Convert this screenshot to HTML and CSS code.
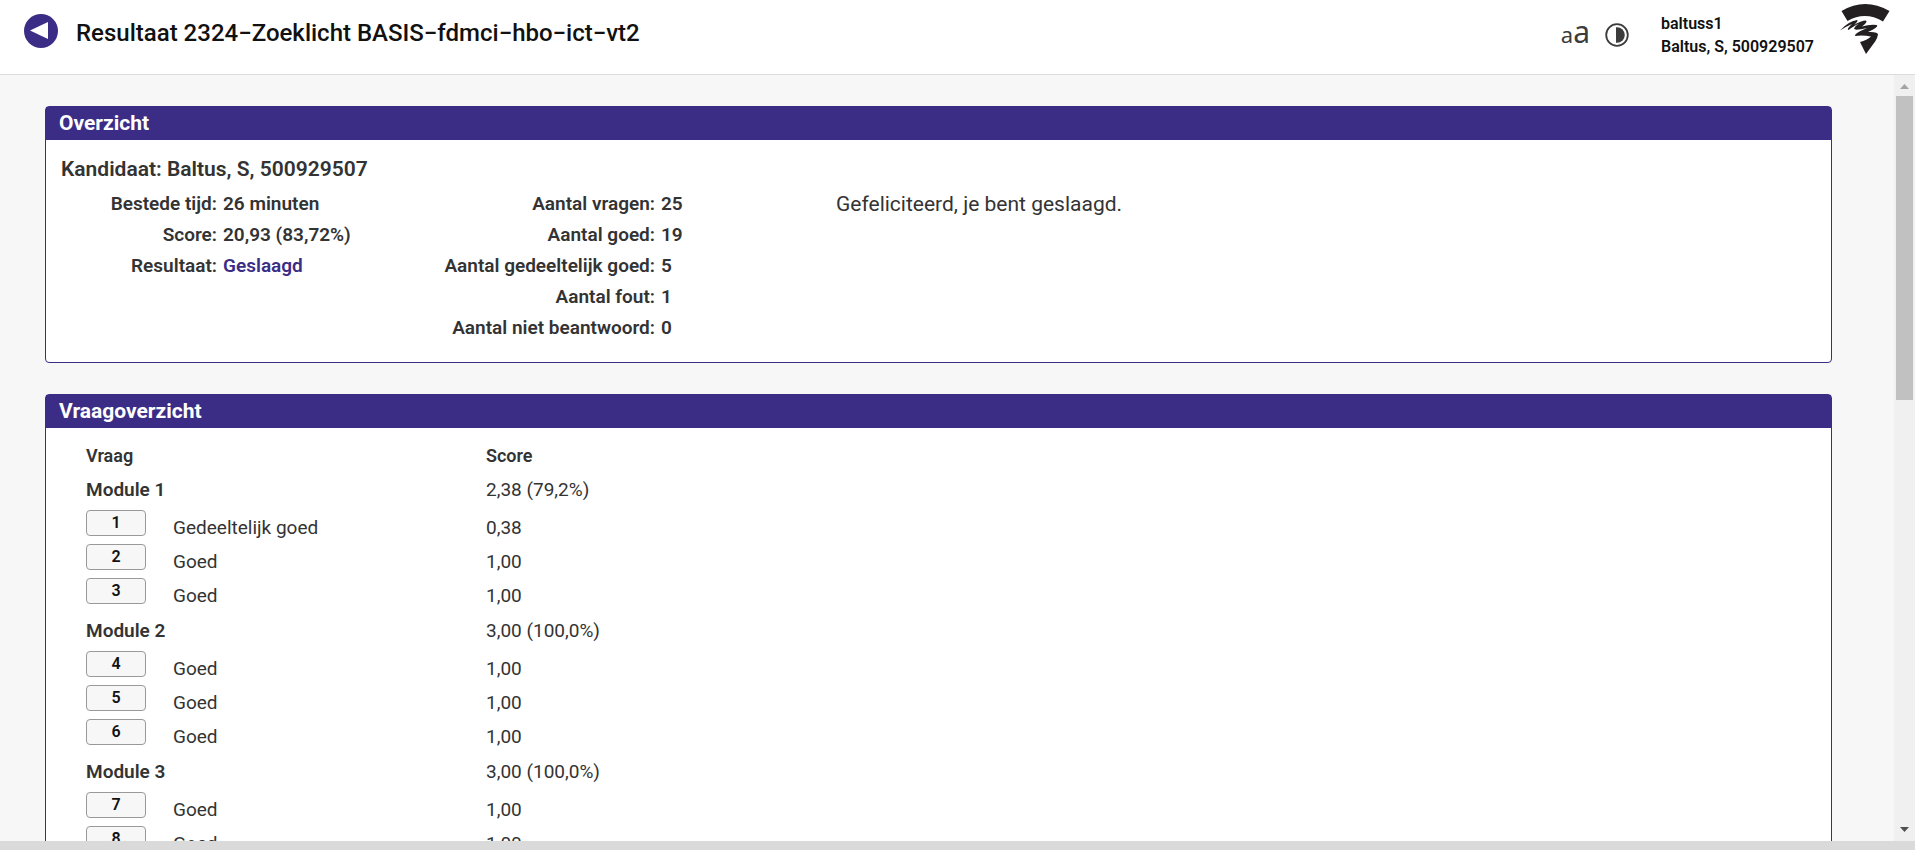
FILE: index.html
```html
<!DOCTYPE html>
<html lang="nl">
<head>
<meta charset="utf-8">
<title>Resultaat 2324−Zoeklicht BASIS−fdmci−hbo−ict−vt2</title>
<link rel="stylesheet" href="styles.css">
</head>
<body>
<header class="topbar">
  <button class="back" type="button" aria-label="Terug">
    <svg viewBox="0 0 34 34" width="34" height="34" aria-hidden="true"><circle cx="17" cy="17" r="17" fill="#3b2d86"/><path d="M6 16.500L24 8V25Z" fill="#fff"/></svg>
  </button>
  <h1 class="title">Resultaat 2324−Zoeklicht BASIS−fdmci−hbo−ict−vt2</h1>
  <button class="textsize" type="button" aria-label="Tekstgrootte"><span class="small-a">a</span><span class="large-a">a</span></button>
  <button class="contrast" type="button" aria-label="Contrast">
    <svg viewBox="0 0 24 24" width="24" height="24" aria-hidden="true"><circle cx="12" cy="12" r="10.800" fill="none" stroke="#3c3c3c" stroke-width="1.800"/><path d="M11 4.200H12A7.800 7.800 0 0 1 12 19.800H11Z" fill="#3c3c3c"/></svg>
  </button>
  <div class="user"><div>baltuss1</div><div>Baltus, S, 500929507</div></div>
  <svg class="logo" viewBox="0 2 50 50" width="50" height="50" role="img" aria-label="Logo">
    <g fill="#231f20">
      <path d="M1.500 9Q25-5 49.500 9L43 19.500Q25 9 7.500 19Z"/>
      <path d="M0 28.500Q8 19.500 17 18Q19 18.500 14 23Q21 18.500 26 18.500Q28 20 22 24.500Q30 22 37 23Q39 25 28 30Q38 29.500 38 32.500Q37.500 35.500 35.500 39L26 52L20 40Q27 38 31 34.500Q23 33 15 34Q14 31.500 27 26Q14 29 14 26.500Q15 24 19 21.500Q12 25 8.500 28Q6 27.500 12 22Q5 25 0 28.500Z"/>
    </g>
  </svg>
</header>
<div class="viewport">
  <main class="content">
    <section class="panel">
      <h2 class="panel-head">Overzicht</h2>
      <div class="overview">
        <h3 class="candidate">Kandidaat: Baltus, S, 500929507</h3>
        <div class="summary">
          <dl class="facts">
            <dt>Bestede tijd:</dt><dd>26 minuten</dd>
            <dt>Score:</dt><dd>20,93 (83,72%)</dd>
            <dt>Resultaat:</dt><dd class="passed">Geslaagd</dd>
          </dl>
          <dl class="facts counts">
            <dt>Aantal vragen:</dt><dd>25</dd>
            <dt>Aantal goed:</dt><dd>19</dd>
            <dt>Aantal gedeeltelijk goed:</dt><dd>5</dd>
            <dt>Aantal fout:</dt><dd>1</dd>
            <dt>Aantal niet beantwoord:</dt><dd>0</dd>
          </dl>
          <p class="message">Gefeliciteerd, je bent geslaagd.</p>
        </div>
      </div>
    </section>
    <section class="panel">
      <h2 class="panel-head">Vraagoverzicht</h2>
      <table class="questions">
        <colgroup><col class="col-number"><col class="col-result"><col></colgroup>
        <thead><tr><th colspan="2" scope="col">Vraag</th><th scope="col">Score</th></tr></thead>
        <tbody>
          <tr class="module"><th colspan="2" scope="row">Module 1</th><td>2,38 (79,2%)</td></tr>
          <tr><td><button class="number" type="button">1</button></td><td>Gedeeltelijk goed</td><td>0,38</td></tr>
          <tr><td><button class="number" type="button">2</button></td><td>Goed</td><td>1,00</td></tr>
          <tr><td><button class="number" type="button">3</button></td><td>Goed</td><td>1,00</td></tr>
        </tbody>
        <tbody>
          <tr class="module"><th colspan="2" scope="row">Module 2</th><td>3,00 (100,0%)</td></tr>
          <tr><td><button class="number" type="button">4</button></td><td>Goed</td><td>1,00</td></tr>
          <tr><td><button class="number" type="button">5</button></td><td>Goed</td><td>1,00</td></tr>
          <tr><td><button class="number" type="button">6</button></td><td>Goed</td><td>1,00</td></tr>
        </tbody>
        <tbody>
          <tr class="module"><th colspan="2" scope="row">Module 3</th><td>3,00 (100,0%)</td></tr>
          <tr><td><button class="number" type="button">7</button></td><td>Goed</td><td>1,00</td></tr>
          <tr><td><button class="number" type="button">8</button></td><td>Goed</td><td>1,00</td></tr>
        </tbody>
      </table>
    </section>
  </main>
  <div class="scrollbar" aria-hidden="true">
    <svg class="arrow" viewBox="0 0 9 5" width="9" height="5"><path d="M0 5L4.500 0L9 5Z" fill="#a3a3a3"/></svg>
    <div class="track"><div class="thumb"></div></div>
    <svg class="arrow" viewBox="0 0 9 5" width="9" height="5"><path d="M0 0H9L4.500 5Z" fill="#505050"/></svg>
  </div>
</div>
<div class="bottom-strip"></div>
</body>
</html>
```
FILE: styles.css
```css
* { box-sizing: border-box; }
body {
  margin: 0;
  height: 100vh;
  display: flex;
  flex-direction: column;
  overflow: hidden;
  font-family: Roboto, "Liberation Sans", sans-serif;
  font-size: 19px;
  color: #333;
  background: #f7f7f7;
}
h1, h2, h3, p, dl, dd { margin: 0; }
button { font-family: inherit; cursor: pointer; }

.topbar {
  flex: none;
  display: flex;
  align-items: flex-start;
  padding: 4px 25px 16px 24px;
  background: #fff;
  border-bottom: 1px solid #dcdcdc;
}
.back { display: flex; margin-top: 10px; }
.back, .textsize, .contrast {
  padding: 0;
  border: 0;
  background: none;
  color: #3c3c3c;
}
.title {
  flex: 1;
  margin: 13px 0 0 18px;
  font-size: 24px;
  line-height: 32px;
  font-weight: 500;
  color: #111;
}
.textsize {
  margin: 12px 15px 0 0;
  font-family: "Noto Sans", sans-serif;
  line-height: 32px;
}
.small-a { font-size: 22px; }
.large-a { font-size: 30px; }
.contrast { display: flex; margin: 19px 32px 0 0; }
.user {
  min-width: 157px;
  margin-right: 22px;
  padding-top: 8px;
  font-size: 16px;
  line-height: 23px;
  font-weight: 600;
  color: #111;
}
.logo { flex: none; }

.viewport { flex: 1; min-height: 0; display: flex; }
.content {
  flex: 1;
  padding: 31px 62px 0 45px;
  overflow: hidden;
}
.panel {
  margin-bottom: 31px;
  background: #fff;
  border: 1px solid #3b2d86;
  border-radius: 4px;
}
.panel-head {
  padding: 0 13px;
  font-size: 21px;
  line-height: 33px;
  font-weight: 700;
  color: #fff;
  background: #3b2d86;
}
.overview { padding: 14px 15px 19px; }
.candidate {
  font-size: 21px;
  line-height: 30px;
  font-weight: 600;
}
.summary {
  display: grid;
  grid-template-columns: 336px 439px 1fr;
  padding-top: 4px;
}
.facts {
  display: grid;
  grid-template-columns: 156px 1fr;
  grid-auto-rows: 31px;
  column-gap: 6px;
  align-items: center;
  align-content: start;
  font-weight: 600;
}
.counts { grid-template-columns: 258px 1fr; }
.facts dt { text-align: right; }
.passed { color: #3b2d86; }
.message { font-size: 21px; line-height: 32px; }

.questions {
  width: calc(100% - 80px);
  margin: 12px 40px 20px;
  table-layout: fixed;
  border-collapse: collapse;
}
.col-number { width: 87px; }
.col-result { width: 313px; }
.questions th, .questions td {
  height: 34px;
  padding: 0;
  text-align: left;
  line-height: 24px;
}
.questions th { font-weight: 600; }
.questions thead th { height: 31px; font-size: 18px; }
.questions td { padding-top: 6px; vertical-align: top; }
.questions td:first-child { padding-top: 0; }
.questions .module th, .questions .module td {
  height: 39px;
  padding: 0 0 1px;
  vertical-align: middle;
}
.number {
  display: block;
  width: 60px;
  height: 26px;
  padding: 0;
  font-size: 16px;
  line-height: 24px;
  font-weight: 600;
  color: #111;
  background: #f7f7f7;
  border: 1px solid #999;
  border-radius: 4px;
}

.scrollbar {
  flex: none;
  width: 21px;
  display: flex;
  flex-direction: column;
  align-items: center;
  padding: 9px 2px;
  background: #f0f0f0;
}
.arrow { flex: none; }
.track { flex: 1; width: 17px; padding: 7px 0; }
.thumb { height: 42%; background: #c1c1c1; }
.bottom-strip { flex: none; height: 9px; background: #dadada; }
```
